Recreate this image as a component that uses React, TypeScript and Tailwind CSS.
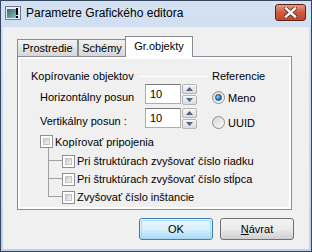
import { ReactNode } from 'react';

const font = { fontFamily: '"Liberation Sans", Arial, sans-serif' };

function CheckBox() {
  return (
    <div className="w-[13px] h-[13px] shrink-0 border border-[#8e8f8f] bg-white p-[2px]">
      <div className="w-full h-full border border-[#c5c5c5] bg-gradient-to-br from-[#cbcbcb] to-[#f6f6f6]" />
    </div>
  );
}

function Radio({ checked }: { checked?: boolean }) {
  return (
    <div className="w-[13px] h-[13px] shrink-0 rounded-full border border-[#8e8f8f] bg-gradient-to-br from-[#d4d4d4] to-[#fbfbfb] flex items-center justify-center">
      {checked && (
        <div className="w-[7px] h-[7px] rounded-full border border-[#1c4a7a] bg-[radial-gradient(circle_at_35%_35%,#9fd6ff,#1f78c9_60%,#0b4c8e)]" />
      )}
    </div>
  );
}

function Spinner() {
  return (
    <div className="w-[15px] h-[21px] flex flex-col gap-[1px] shrink-0">
      {['up', 'down'].map((d) => (
        <div
          key={d}
          className="flex-1 border border-[#b5b5b5] rounded-[2px] bg-gradient-to-b from-[#f6f6f6] to-[#dadada] flex items-center justify-center"
        >
          <svg width="7" height="4" viewBox="0 0 7 4">
            {d === 'up' ? (
              <polygon points="3.5,0 7,4 0,4" fill="#4d6185" />
            ) : (
              <polygon points="0,0 7,0 3.5,4" fill="#4d6185" />
            )}
          </svg>
        </div>
      ))}
    </div>
  );
}

function NumRow({ label, value }: { label: string; value: string }) {
  return (
    <div className="flex h-[20px] items-center pl-[9px]">
      <div className="w-[105px] h-full pt-[6px] leading-[14px]">{label}</div>
      <div className="w-[36px] h-[20px] border border-[#abadb3] border-t-[#7a7a7a] bg-white pl-[4px] leading-[18px]">
        {value}
      </div>
      <div className="ml-[1px]">
        <Spinner />
      </div>
    </div>
  );
}

function SubRow({ last, children }: { last?: boolean; children: ReactNode }) {
  return (
    <div className="flex h-[18px] items-center">
      <div className="w-[14px] h-full flex flex-col">
        <div className="h-[9px] border-l border-b border-[#a0a0a0]" />
        <div className={last ? 'h-[9px]' : 'h-[9px] border-l border-[#a0a0a0]'} />
      </div>
      <CheckBox />
      <span className="ml-[2px] leading-[14px]">{children}</span>
    </div>
  );
}

export default function App() {
  return (
    <div
      style={font}
      className="w-[312px] h-[252px] border border-[#34475e] bg-gradient-to-b from-[#d3e1f2] to-[#bcd1ea] flex flex-col text-[11px] text-black overflow-hidden"
    >
      {/* title bar */}
      <div className="h-[26px] flex items-start shrink-0">
        <div className="mt-[5px] ml-[4px] w-[16px] h-[14px] border border-[#6b7a8c] bg-[#e8eef5] relative">
          <div className="absolute left-[1px] top-[2px] w-[9px] h-[9px] bg-gradient-to-br from-[#2f6f6a] to-[#8fb8c4]" />
          <div className="absolute right-[2px] top-[1px] w-[2px] h-[7px] bg-black" />
          <div className="absolute right-[2px] top-[9px] w-[2px] h-[2px] bg-black" />
        </div>
        <span className="ml-[5px] mt-[5px] text-[12px] leading-[15px] text-black">Parametre Grafického editora</span>
        <div className="ml-auto mr-[5px] mt-[3px] w-[31px] h-[17px] rounded-[3px] border border-[#5b2218] bg-gradient-to-b from-[#e49a86] via-[#cf5a40] to-[#c2452d] flex items-center justify-center">
          <svg width="13" height="11" viewBox="0 0 13 11">
            <path d="M2 1.5 L11 9.5 M11 1.5 L2 9.5" stroke="#5a2a20" strokeWidth="4" strokeLinecap="square" />
            <path d="M2 1.5 L11 9.5 M11 1.5 L2 9.5" stroke="#ffffff" strokeWidth="2.4" strokeLinecap="square" />
          </svg>
        </div>
      </div>

      {/* client area */}
      <div className="flex-1 mx-[2px] mb-[2px] bg-[#f0f0f0] flex flex-col">
        {/* tabs */}
        <div className="flex items-end h-[20px] mt-[9px] ml-[14px] relative z-10">
          <div className="w-[61px] h-[17px] border border-b-0 border-[#898c95] bg-gradient-to-b from-[#f2f2f2] to-[#d6d6d6] text-center leading-[16px]">
            Prostredie
          </div>
          <div className="w-[48px] h-[17px] border border-b-0 border-[#898c95] bg-gradient-to-b from-[#f2f2f2] to-[#d6d6d6] text-center leading-[16px]">
            Schémy
          </div>
          <div className="-ml-[1px] w-[68px] h-[21px] -mb-[1px] border border-b-0 border-[#898c95] bg-white text-center leading-[16px] pt-[1px]">
            Gr.objekty
          </div>
        </div>

        {/* tab panel */}
        <div className="ml-[14px] w-[275px] h-[154px] border border-[#898c95] bg-white p-[2px]">
          <div className="w-full h-full bg-[#f0f0f0] flex pl-[11px] pt-[10px]">
            {/* left column */}
            <div className="w-[176px] flex flex-col">
              <div className="flex items-center h-[14px]">
                <span>Kopírovanie objektov</span>
                <div className="flex-1 ml-[6px] h-px bg-[#d5dfe5] border-b border-white" />
              </div>
              <div className="mt-[1px]">
                <NumRow label="Horizontálny posun" value="10" />
              </div>
              <div className="mt-[4px]">
                <NumRow label="Vertikálny posun :" value="10" />
              </div>
              <div className="mt-[7px] pl-[9px] flex items-center h-[13px]">
                <CheckBox />
                <span className="ml-[2px] leading-[14px]">Kopírovať pripojenia</span>
              </div>
              <div className="ml-[17px] h-[4px] border-l border-[#a0a0a0]" />
              <div className="ml-[17px] w-[240px] flex flex-col">
                <SubRow>Pri štruktúrach zvyšovať číslo riadku</SubRow>
                <SubRow>Pri štruktúrach zvyšovať číslo stĺpca</SubRow>
                <SubRow last>Zvyšovať číslo inštancie</SubRow>
              </div>
            </div>

            {/* right column */}
            <div className="ml-[5px] flex flex-col">
              <div className="h-[14px] leading-[14px]">Referencie</div>
              <div className="mt-[8px] h-[13px] flex items-center">
                <Radio checked />
                <span className="ml-[3px] leading-[14px]">Meno</span>
              </div>
              <div className="mt-[12px] h-[13px] flex items-center">
                <Radio />
                <span className="ml-[3px] leading-[14px]">UUID</span>
              </div>
            </div>
          </div>
        </div>

        {/* buttons */}
        <div className="flex justify-end gap-[7px] mt-[8px] mr-[15px]">
          <div className="w-[74px] h-[22px] rounded-[3px] border border-[#3c7fb1] bg-gradient-to-b from-[#eaf6fd] via-[#d9f0fc] to-[#a7d9f5] p-[1px]">
            <div className="w-full h-full rounded-[2px] border border-[#a8dbf7] flex items-center justify-center">
              OK
            </div>
          </div>
          <div className="w-[74px] h-[22px] rounded-[3px] border border-[#707070] bg-gradient-to-b from-[#f2f2f2] via-[#ebebeb] to-[#cfcfcf] flex items-center justify-center">
            <span>
              <span className="underline">N</span>ávrat
            </span>
          </div>
        </div>
      </div>
    </div>
  );
}
